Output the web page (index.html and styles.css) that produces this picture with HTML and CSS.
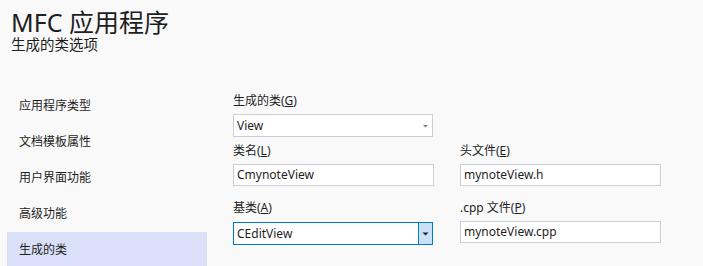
FILE: index.html
```html
<!DOCTYPE html>
<html lang="zh-CN">
<head>
<meta charset="utf-8">
<title>MFC 应用程序</title>
<link rel="stylesheet" href="styles.css">
</head>
<body>
<div class="page">
  <header class="header">
    <h1 class="title">MFC 应用程序</h1>
    <div class="subtitle">生成的类选项</div>
  </header>
  <div class="main">
    <nav class="nav">
      <div class="nav-item">应用程序类型</div>
      <div class="nav-item">文档模板属性</div>
      <div class="nav-item">用户界面功能</div>
      <div class="nav-item">高级功能</div>
      <div class="nav-item selected">生成的类</div>
    </nav>
    <div class="form">
      <div class="field first">
        <label class="label">生成的类(<u>G</u>)</label>
        <div class="combo">
          <span class="value">View</span>
          <span class="arrow-box"><svg width="7" height="4" viewBox="0 0 7 4"><path d="M1 1h5l-2.5 2.5z" fill="#7a7a7a"/></svg></span>
        </div>
      </div>
      <div class="grid">
        <div class="field">
          <label class="label">类名(<u>L</u>)</label>
          <div class="input wide">CmynoteView</div>
        </div>
        <div class="field">
          <label class="label">头文件(<u>E</u>)</label>
          <div class="input wide">mynoteView.h</div>
        </div>
        <div class="field lower">
          <label class="label">基类(<u>A</u>)</label>
          <div class="combo focused">
            <span class="value">CEditView</span>
            <span class="arrow-box"><svg width="7" height="4" viewBox="0 0 7 4"><path d="M0.5 0.5h6l-3 3z" fill="#1e1e1e"/></svg></span>
          </div>
        </div>
        <div class="field lower right">
          <label class="label">.cpp 文件(<u>P</u>)</label>
          <div class="input wide">mynoteView.cpp</div>
        </div>
      </div>
    </div>
  </div>
</div>
</body>
</html>
```
FILE: styles.css
```css
html, body {
  margin: 0;
  padding: 0;
  background: #f9f9f9;
  color: #1e1e1e;
  font-family: "Noto Sans", "Noto Sans CJK SC", sans-serif;
  overflow: hidden;
}
.page {
  width: 703px;
  height: 266px;
  overflow: hidden;
}
.header {
  padding: 8px 0 0 11px;
}
.title {
  margin: 0;
  font-weight: normal;
  font-size: 25px;
  line-height: 28px;
  color: #1e1e1e;
}
.subtitle {
  font-size: 14.5px;
  line-height: 17px;
  margin-top: 0;
}
.main {
  display: flex;
  margin-top: 35px;
}
.nav {
  margin-left: 7px;
  width: 200px;
  display: flex;
  flex-direction: column;
}
.nav-item {
  height: 36px;
  line-height: 36px;
  padding-left: 12px;
  font-size: 12px;
  color: #1e1e1e;
}
.nav-item.selected {
  background: #dae0f8;
}
.form {
  margin-left: 26px;
  padding-top: 3px;
}
.field {
  display: flex;
  flex-direction: column;
}
.label {
  font-size: 12px;
  line-height: 20px;
  margin-bottom: 3px;
}
.label u {
  text-underline-offset: 1px;
}
.combo {
  box-sizing: border-box;
  width: 200px;
  height: 23px;
  border: 1px solid #cccedb;
  background: #ffffff;
  display: flex;
  align-items: center;
  font-size: 12px;
}
.combo .value {
  flex: 1;
  padding-left: 3px;
}
.arrow-box {
  width: 13px;
  height: 100%;
  display: flex;
  align-items: center;
  justify-content: center;
}
.combo.focused {
  border-color: #007acc;
  height: 23px;
}
.combo.focused .arrow-box {
  background: #c9e0f7;
  border-left: 1px solid #007acc;
}
.grid {
  display: grid;
  grid-template-columns: 201px 201px;
  column-gap: 26px;
  margin-top: 4px;
}
.input {
  box-sizing: border-box;
  width: 201px;
  height: 22px;
  border: 1px solid #cccedb;
  background: #ffffff;
  font-size: 12px;
  line-height: 20px;
  padding-left: 3px;
}
.field.lower {
  margin-top: 12px;
}
.field.lower .label {
  margin-bottom: 4px;
}
.field.lower.right .label {
  margin-bottom: 3px;
}
```
